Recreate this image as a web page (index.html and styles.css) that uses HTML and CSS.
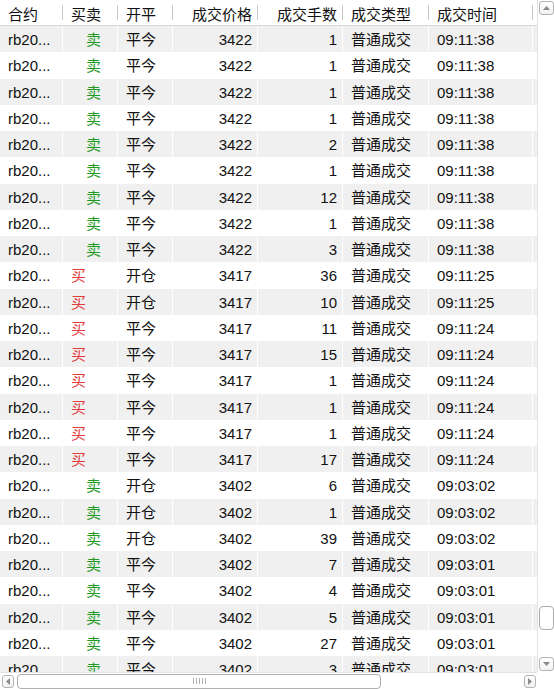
FILE: index.html
```html
<!DOCTYPE html>
<html lang="zh">
<head>
<meta charset="utf-8">
<title>成交记录</title>
<link rel="stylesheet" href="styles.css">
</head>
<body>
<div class="grid-view">
  <div class="viewport">
    <div class="row head">
      <div class="c">合约</div><div class="c">买卖</div><div class="c">开平</div><div class="c r">成交价格</div><div class="c r">成交手数</div><div class="c">成交类型</div><div class="c">成交时间</div><div class="c fill"></div>
    </div>
    <div class="row"><div class="c">rb20...</div><div class="c sell">卖</div><div class="c">平今</div><div class="c r">3422</div><div class="c r">1</div><div class="c">普通成交</div><div class="c">09:11:38</div><div class="c fill"></div></div>
    <div class="row"><div class="c">rb20...</div><div class="c sell">卖</div><div class="c">平今</div><div class="c r">3422</div><div class="c r">1</div><div class="c">普通成交</div><div class="c">09:11:38</div><div class="c fill"></div></div>
    <div class="row"><div class="c">rb20...</div><div class="c sell">卖</div><div class="c">平今</div><div class="c r">3422</div><div class="c r">1</div><div class="c">普通成交</div><div class="c">09:11:38</div><div class="c fill"></div></div>
    <div class="row"><div class="c">rb20...</div><div class="c sell">卖</div><div class="c">平今</div><div class="c r">3422</div><div class="c r">1</div><div class="c">普通成交</div><div class="c">09:11:38</div><div class="c fill"></div></div>
    <div class="row"><div class="c">rb20...</div><div class="c sell">卖</div><div class="c">平今</div><div class="c r">3422</div><div class="c r">2</div><div class="c">普通成交</div><div class="c">09:11:38</div><div class="c fill"></div></div>
    <div class="row"><div class="c">rb20...</div><div class="c sell">卖</div><div class="c">平今</div><div class="c r">3422</div><div class="c r">1</div><div class="c">普通成交</div><div class="c">09:11:38</div><div class="c fill"></div></div>
    <div class="row"><div class="c">rb20...</div><div class="c sell">卖</div><div class="c">平今</div><div class="c r">3422</div><div class="c r">12</div><div class="c">普通成交</div><div class="c">09:11:38</div><div class="c fill"></div></div>
    <div class="row"><div class="c">rb20...</div><div class="c sell">卖</div><div class="c">平今</div><div class="c r">3422</div><div class="c r">1</div><div class="c">普通成交</div><div class="c">09:11:38</div><div class="c fill"></div></div>
    <div class="row"><div class="c">rb20...</div><div class="c sell">卖</div><div class="c">平今</div><div class="c r">3422</div><div class="c r">3</div><div class="c">普通成交</div><div class="c">09:11:38</div><div class="c fill"></div></div>
    <div class="row"><div class="c">rb20...</div><div class="c buy">买</div><div class="c">开仓</div><div class="c r">3417</div><div class="c r">36</div><div class="c">普通成交</div><div class="c">09:11:25</div><div class="c fill"></div></div>
    <div class="row"><div class="c">rb20...</div><div class="c buy">买</div><div class="c">开仓</div><div class="c r">3417</div><div class="c r">10</div><div class="c">普通成交</div><div class="c">09:11:25</div><div class="c fill"></div></div>
    <div class="row"><div class="c">rb20...</div><div class="c buy">买</div><div class="c">平今</div><div class="c r">3417</div><div class="c r">11</div><div class="c">普通成交</div><div class="c">09:11:24</div><div class="c fill"></div></div>
    <div class="row"><div class="c">rb20...</div><div class="c buy">买</div><div class="c">平今</div><div class="c r">3417</div><div class="c r">15</div><div class="c">普通成交</div><div class="c">09:11:24</div><div class="c fill"></div></div>
    <div class="row"><div class="c">rb20...</div><div class="c buy">买</div><div class="c">平今</div><div class="c r">3417</div><div class="c r">1</div><div class="c">普通成交</div><div class="c">09:11:24</div><div class="c fill"></div></div>
    <div class="row"><div class="c">rb20...</div><div class="c buy">买</div><div class="c">平今</div><div class="c r">3417</div><div class="c r">1</div><div class="c">普通成交</div><div class="c">09:11:24</div><div class="c fill"></div></div>
    <div class="row"><div class="c">rb20...</div><div class="c buy">买</div><div class="c">平今</div><div class="c r">3417</div><div class="c r">1</div><div class="c">普通成交</div><div class="c">09:11:24</div><div class="c fill"></div></div>
    <div class="row"><div class="c">rb20...</div><div class="c buy">买</div><div class="c">平今</div><div class="c r">3417</div><div class="c r">17</div><div class="c">普通成交</div><div class="c">09:11:24</div><div class="c fill"></div></div>
    <div class="row"><div class="c">rb20...</div><div class="c sell">卖</div><div class="c">开仓</div><div class="c r">3402</div><div class="c r">6</div><div class="c">普通成交</div><div class="c">09:03:02</div><div class="c fill"></div></div>
    <div class="row"><div class="c">rb20...</div><div class="c sell">卖</div><div class="c">开仓</div><div class="c r">3402</div><div class="c r">1</div><div class="c">普通成交</div><div class="c">09:03:02</div><div class="c fill"></div></div>
    <div class="row"><div class="c">rb20...</div><div class="c sell">卖</div><div class="c">开仓</div><div class="c r">3402</div><div class="c r">39</div><div class="c">普通成交</div><div class="c">09:03:02</div><div class="c fill"></div></div>
    <div class="row"><div class="c">rb20...</div><div class="c sell">卖</div><div class="c">平今</div><div class="c r">3402</div><div class="c r">7</div><div class="c">普通成交</div><div class="c">09:03:01</div><div class="c fill"></div></div>
    <div class="row"><div class="c">rb20...</div><div class="c sell">卖</div><div class="c">平今</div><div class="c r">3402</div><div class="c r">4</div><div class="c">普通成交</div><div class="c">09:03:01</div><div class="c fill"></div></div>
    <div class="row"><div class="c">rb20...</div><div class="c sell">卖</div><div class="c">平今</div><div class="c r">3402</div><div class="c r">5</div><div class="c">普通成交</div><div class="c">09:03:01</div><div class="c fill"></div></div>
    <div class="row"><div class="c">rb20...</div><div class="c sell">卖</div><div class="c">平今</div><div class="c r">3402</div><div class="c r">27</div><div class="c">普通成交</div><div class="c">09:03:01</div><div class="c fill"></div></div>
    <div class="row"><div class="c">rb20...</div><div class="c sell">卖</div><div class="c">平今</div><div class="c r">3402</div><div class="c r">3</div><div class="c">普通成交</div><div class="c">09:03:01</div><div class="c fill"></div></div>
  </div>

  <div class="vscroll">
    <div class="sbtn vbtn"><svg width="7" height="4" viewBox="0 0 7 4"><path d="M0 4 L3.5 0 L7 4 Z" fill="#8a8a8a"/></svg></div>
    <div class="vtrack"><div class="vthumb"></div></div>
    <div class="sbtn vbtn"><svg width="7" height="4" viewBox="0 0 7 4"><path d="M0 0 L7 0 L3.5 4 Z" fill="#8a8a8a"/></svg></div>
  </div>

  <div class="hscroll">
    <div class="sbtn hbtn"><svg width="4" height="7" viewBox="0 0 4 7"><path d="M4 0 L4 7 L0 3.5 Z" fill="#8a8a8a"/></svg></div>
    <div class="htrack">
      <div class="hthumb"><svg width="13" height="6" viewBox="0 0 13 6"><path d="M0.5 0 V6 M3.5 0 V6 M6.5 0 V6 M9.5 0 V6 M12.5 0 V6" stroke="#b0b0b0" stroke-width="1"/></svg></div>
    </div>
    <div class="sbtn hbtn"><svg width="4" height="7" viewBox="0 0 4 7"><path d="M0 0 L0 7 L4 3.5 Z" fill="#8a8a8a"/></svg></div>
  </div>

  <div class="corner"></div>
</div>
</body>
</html>
```

FILE: styles.css
```css
html, body {
  margin: 0;
  padding: 0;
  background: #ffffff;
}

.grid-view {
  width: 554px;
  height: 689px;
  display: grid;
  grid-template-columns: 537px 17px;
  grid-template-rows: 672px 17px;
  font-family: "Liberation Sans", "Noto Sans CJK SC", sans-serif;
  font-size: 15px;
  color: #111111;
  overflow: hidden;
}

.viewport {
  overflow: hidden;
  display: flex;
  flex-direction: column;
}

.row {
  display: grid;
  grid-template-columns: 63px 55px 55px 85px 85px 86px 104px 4px;
  height: 26.25px;
  flex: none;
  line-height: 28px;
}

.row:nth-child(even) {
  background: #f0f0f0;
}

.row.head {
  height: 25px;
  line-height: 29px;
  border-bottom: 1px solid #d6d6d6;
  background: #ffffff;
  color: #111111;
}

.c {
  padding: 0 5px 0 8px;
  border-right: 1px solid #ffffff;
  white-space: nowrap;
  overflow: hidden;
}

.head .c {
  border-right: none;
  padding-right: 6px;
  background: linear-gradient(#c9c9c9, #c9c9c9) right 5px / 1px 15px no-repeat;
}

.c.r {
  text-align: right;
}

.head .c.r {
  padding-right: 6px;
}

.c.fill {
  padding: 0;
  border-right: none;
}

.head .c.fill {
  background: none;
}

.c.sell {
  color: #1f9a1f;
  padding-left: 23px;
}

.c.buy {
  color: #e43b3b;
  padding-left: 8px;
}

/* vertical scrollbar */
.vscroll {
  border-left: 1px solid #e3e3e3;
  display: flex;
  flex-direction: column;
  align-items: center;
  padding: 1px 0 1px;
  background: #ffffff;
}

.sbtn {
  box-sizing: border-box;
  border: 1px solid #b4b4b4;
  border-radius: 3px;
  background: linear-gradient(#ffffff, #f1f1f1);
  display: flex;
  align-items: center;
  justify-content: center;
  flex: none;
}

.vbtn {
  width: 15px;
  height: 14px;
}

.vtrack {
  flex: 1;
  display: flex;
  flex-direction: column;
}

.vthumb {
  box-sizing: border-box;
  width: 15px;
  height: 24px;
  margin-top: 591px;
  border: 1px solid #aaaaaa;
  border-radius: 4px;
  background: #ffffff;
}

/* horizontal scrollbar */
.hscroll {
  border-top: 1px solid #e3e3e3;
  display: flex;
  align-items: center;
  padding: 0 1px 0 2px;
  background: #ffffff;
}

.hbtn {
  width: 12px;
  height: 13px;
}

.htrack {
  flex: 1;
  display: flex;
  align-items: center;
  padding-left: 3px;
}

.hthumb {
  box-sizing: border-box;
  width: 364px;
  height: 15px;
  border: 1px solid #b0b0b0;
  border-radius: 4px;
  background: #ffffff;
  display: flex;
  align-items: center;
  justify-content: center;
}

.corner {
  background: #ffffff;
}
```
